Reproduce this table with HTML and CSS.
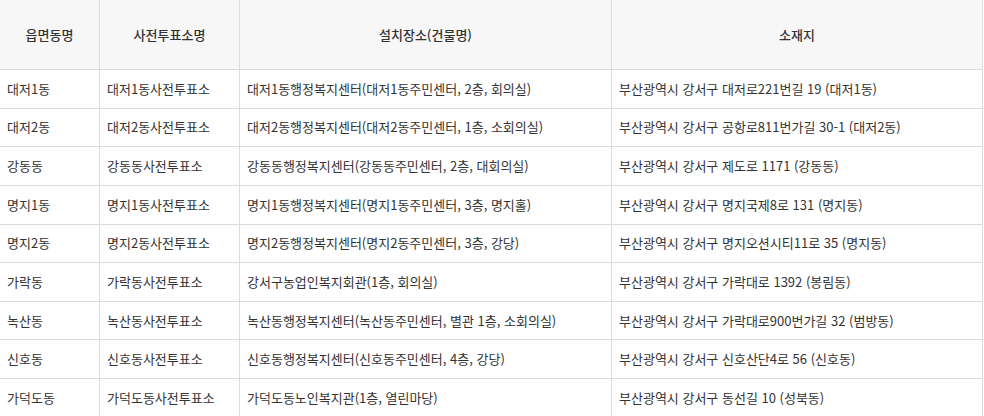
FILE: index.html
```html
<!DOCTYPE html>
<html lang="ko">
<head>
<meta charset="utf-8">
<link rel="stylesheet" href="styles.css">
</head>
<body>
<table class="vote-table">
  <colgroup>
    <col class="c1"><col class="c2"><col class="c3"><col class="c4">
  </colgroup>
  <thead>
    <tr>
      <th>읍면동명</th>
      <th>사전투표소명</th>
      <th>설치장소(건물명)</th>
      <th>소재지</th>
    </tr>
  </thead>
  <tbody>
    <tr><td>대저1동</td><td>대저1동사전투표소</td><td>대저1동행정복지센터(대저1동주민센터, 2층, 회의실)</td><td>부산광역시 강서구 대저로221번길 19 (대저1동)</td></tr>
    <tr><td>대저2동</td><td>대저2동사전투표소</td><td>대저2동행정복지센터(대저2동주민센터, 1층, 소회의실)</td><td>부산광역시 강서구 공항로811번가길 30-1 (대저2동)</td></tr>
    <tr><td>강동동</td><td>강동동사전투표소</td><td>강동동행정복지센터(강동동주민센터, 2층, 대회의실)</td><td>부산광역시 강서구 제도로 1171 (강동동)</td></tr>
    <tr><td>명지1동</td><td>명지1동사전투표소</td><td>명지1동행정복지센터(명지1동주민센터, 3층, 명지홀)</td><td>부산광역시 강서구 명지국제8로 131 (명지동)</td></tr>
    <tr><td>명지2동</td><td>명지2동사전투표소</td><td>명지2동행정복지센터(명지2동주민센터, 3층, 강당)</td><td>부산광역시 강서구 명지오션시티11로 35 (명지동)</td></tr>
    <tr><td>가락동</td><td>가락동사전투표소</td><td>강서구농업인복지회관(1층, 회의실)</td><td>부산광역시 강서구 가락대로 1392 (봉림동)</td></tr>
    <tr><td>녹산동</td><td>녹산동사전투표소</td><td>녹산동행정복지센터(녹산동주민센터, 별관 1층, 소회의실)</td><td>부산광역시 강서구 가락대로900번가길 32 (범방동)</td></tr>
    <tr><td>신호동</td><td>신호동사전투표소</td><td>신호동행정복지센터(신호동주민센터, 4층, 강당)</td><td>부산광역시 강서구 신호산단4로 56 (신호동)</td></tr>
    <tr><td>가덕도동</td><td>가덕도동사전투표소</td><td>가덕도동노인복지관(1층, 열린마당)</td><td>부산광역시 강서구 동선길 10 (성북동)</td></tr>
  </tbody>
</table>
</body>
</html>
```
FILE: styles.css
```css
html, body {
  margin: 0;
  padding: 0;
  background: #fff;
}
body {
  font-family: "Noto Sans CJK KR", "Noto Sans", sans-serif;
  color: #333;
  font-size: 13px;
  overflow: hidden;
}
.vote-table {
  border-collapse: collapse;
  table-layout: fixed;
  width: 983px;
  margin-left: -1px;
}
.c1 { width: 100px; }
.c2 { width: 140px; }
.c3 { width: 372px; }
.c4 { width: 371px; }
.vote-table th,
.vote-table td {
  border: 1px solid #dcdcdc;
  padding: 0 7px;
  vertical-align: middle;
  line-height: 18px;
  white-space: nowrap;
  overflow: hidden;
}
.vote-table thead th {
  border-top: none;
  background: #f7f7f7;
  height: 69px;
  font-weight: 500;
  text-align: center;
  color: #333;
}
.vote-table tbody td {
  height: 37.625px;
  text-align: left;
  color: #333;
}
```
